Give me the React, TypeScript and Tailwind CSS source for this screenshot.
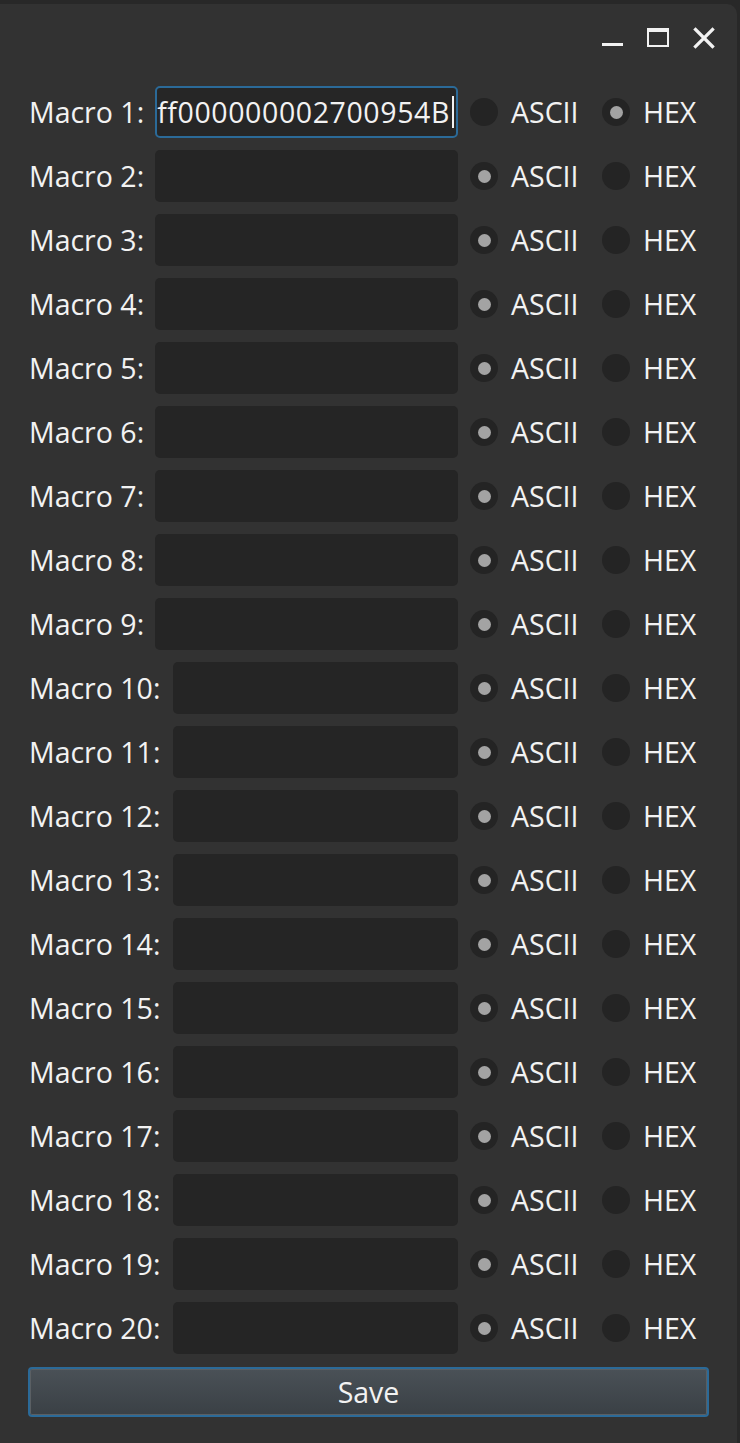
import React, { useState } from "react";

const font = { fontFamily: '"Open Sans", "Noto Sans", sans-serif' };

type Mode = "ascii" | "hex";

const initial: { value: string; mode: Mode }[] = Array.from({ length: 20 }, (_, i) =>
  i === 0 ? { value: "ff000000002700954B", mode: "hex" } : { value: "", mode: "ascii" }
);

const Radio = ({ checked }: { checked: boolean }) => (
  <span className="flex h-[28px] w-[28px] items-center justify-center rounded-full bg-[#242424]">
    {checked && <span className="h-[13px] w-[13px] rounded-full bg-[#a3a3a3]" />}
  </span>
);

const TitleBar = () => (
  <div className="flex h-[82px] items-start justify-end gap-[24px] pr-[22px] pt-[23px]">
    <svg width="21" height="22" viewBox="0 0 21 22">
      <rect x="0" y="16" width="21" height="3" fill="#f2f2f2" />
    </svg>
    <svg width="22" height="22" viewBox="0 0 22 22">
      <rect x="1" y="2" width="20" height="17" fill="none" stroke="#f2f2f2" strokeWidth="2" />
      <rect x="1" y="2" width="20" height="3" fill="#f2f2f2" />
    </svg>
    <svg width="22" height="22" viewBox="0 0 22 22">
      <path d="M2.5 2.5 L19.5 19.5 M19.5 2.5 L2.5 19.5" stroke="#f2f2f2" strokeWidth="3.2" strokeLinecap="square" />
    </svg>
  </div>
);

export default function App() {
  const [rows, setRows] = useState(initial);

  const setMode = (i: number, mode: Mode) =>
    setRows((prev) => prev.map((r, j) => (j === i ? { ...r, mode } : r)));

  return (
    <div className="h-[1443px] w-[740px] bg-[#282828] pt-[4px]" style={font}>
      <div className="h-[1439px] w-[737px] rounded-tr-[10px] bg-[#323232] text-[#f2f2f2]">
        <TitleBar />

        <div className="flex flex-col gap-[12px]">
          {rows.map((row, i) => (
            <div key={i} className="flex h-[52px] items-center pl-[29px] pr-[27px]">
              <span className="text-[28.5px] leading-none">Macro {i + 1}:</span>
              {i === 0 ? (
                <div className="ml-[11px] flex h-[52px] flex-1 items-center overflow-hidden rounded-[5px] border-2 border-[#2b6a98] bg-[#262626]">
                  <span className="whitespace-nowrap text-[28.5px] leading-none tracking-[0.6px]">{row.value}</span>
                  <span className="ml-[2px] h-[32px] w-[2px] shrink-0 bg-[#f2f2f2]" />
                </div>
              ) : (
                <div
                  className={
                    i >= 9
                      ? "ml-[13px] h-[52px] flex-1 rounded-[5px] bg-[#252525]"
                      : "ml-[11px] h-[52px] flex-1 rounded-[5px] bg-[#252525]"
                  }
                />
              )}
              <button
                onClick={() => setMode(i, "ascii")}
                className="ml-[12px] flex w-[132px] items-center gap-[13px]"
              >
                <Radio checked={row.mode === "ascii"} />
                <span className="text-[28.5px] leading-none">ASCII</span>
              </button>
              <button onClick={() => setMode(i, "hex")} className="flex w-[108px] items-center gap-[13px]">
                <Radio checked={row.mode === "hex"} />
                <span className="text-[28.5px] leading-none">HEX</span>
              </button>
            </div>
          ))}
        </div>

        <div className="px-[28px] pt-[13px]">
          <button className="flex h-[50px] w-full items-center justify-center rounded-[4px] border-2 border-[#2b6a98] bg-gradient-to-b from-[#4a5157] to-[#3a4045] text-[28.5px] shadow-[inset_0_0_0_1px_#5a5f63]">
            Save
          </button>
        </div>
      </div>
    </div>
  );
}
